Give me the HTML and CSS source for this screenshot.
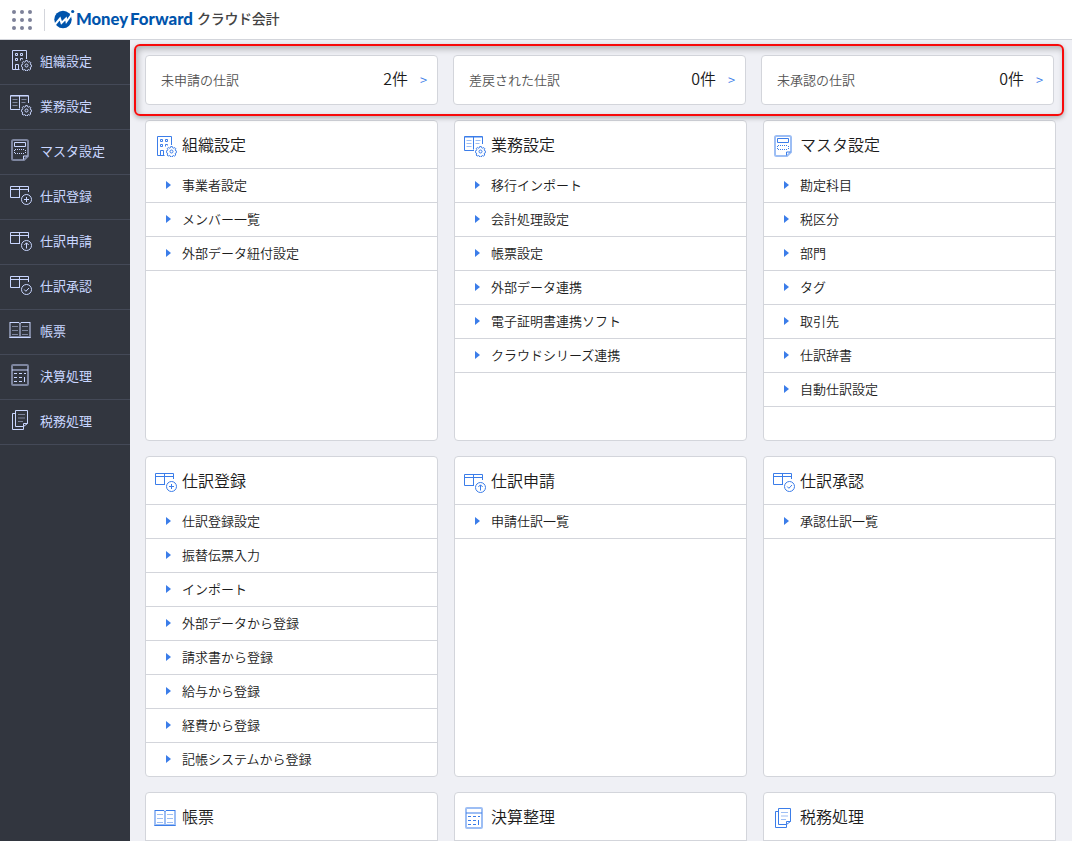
FILE: index.html
```html
<!DOCTYPE html>
<html lang="ja">
<head>
<meta charset="utf-8">
<title>Money Forward クラウド会計</title>
<link rel="stylesheet" href="styles.css">
</head>
<body>
<svg class="sprite" width="0" height="0" aria-hidden="true">
  <symbol id="gear" viewBox="0 0 11 11">
    <path d="M4.600.6h1.800l.3 1.200 1 .4 1.100-.6 1.100 1.200-.7 1 .4 1 1.100.3v1.500l-1.100.3-.4 1 .6 1.100-1.100 1.100-1-.6-1 .4-.3 1.100H4.600l-.3-1.100-1-.4-1.100.6L1.100 9l.6-1.100-.4-1L.3 6.600V4.900l1.100-.3.4-1-.6-1L2.300 1.500l1 .7 1-.4z"/><circle cx="5.500" cy="5.500" r="1.500"/>
  </symbol>
  <symbol id="org" viewBox="0 0 24 24">
    <path d="M11.500 21.500h-7v-19h14V11"/><path d="M7.500 5.500h2v2h-2zM12.500 5.500h2v2h-2zM7.500 10.500h2v2h-2zM12.500 12.500v-2h2v1M7.500 21v-4.500h3V21"/>
    <use href="#gear" x="13" y="12" width="11" height="11"/>
  </symbol>
  <symbol id="biz" viewBox="0 0 24 24">
    <path d="M12 16.500H2.500v-14h18V10M11.500 2.500v13"/><path class="soft" d="M4.500 6.500h5M4.500 9.500h5M4.500 12.500h5M13.500 6.500h5M13.500 9.500h4M3 3.500h17"/>
    <use href="#gear" x="13" y="12" width="11" height="11"/>
  </symbol>
  <symbol id="master" viewBox="0 0 24 24">
    <path class="soft wide" d="M16 22H5.500Q4 22 4 20.500v-17Q4 2 5.500 2h13Q20 2 20 3.500V18z"/><path d="M6.500 4.500h11v4h-11zM15.500 21.500v-3.500h4"/><path class="dash" d="M7 11.500h10M7 15.500h10M6.500 12v3M17.500 12v3"/>
  </symbol>
  <symbol id="table" viewBox="0 0 24 24">
    <path d="M12 14.500H2.500v-11h18V9M2.500 6.500h18M11.500 3.500v11"/><circle cx="18.500" cy="16.500" r="5"/>
  </symbol>
  <symbol id="register" viewBox="0 0 24 24"><use href="#table"/><path d="M18.500 14v5M16 16.500h5"/></symbol>
  <symbol id="apply" viewBox="0 0 24 24"><use href="#table" y="1" width="24" height="24"/><path d="M18.500 20.500v-5.500M16.300 17l2.200-2.200 2.200 2.200"/></symbol>
  <symbol id="approve" viewBox="0 0 24 24"><use href="#table"/><path d="M16.200 16.500l1.700 1.800 3.100-3.300"/></symbol>
  <symbol id="report" viewBox="0 0 24 24">
    <path class="soft wide" d="M2 5v14h20V5M12 5v14"/><path d="M1.500 4.500h9.500l1 1 1-1h9.500M1.500 19.500h21"/><path class="soft" d="M4 8.500h6M4 12.500h6M4 16.500h6M14 8.500h6M14 12.500h6M14 16.500h6"/>
  </symbol>
  <symbol id="closing" viewBox="0 0 24 24">
    <rect class="soft wide" x="4" y="2" width="16" height="20" rx="1"/><path class="soft wide" d="M4 7h16"/><path class="dots" d="M6 10.500h12M6 14.500h8M6 18.500h8"/><path d="M16.500 14v5"/>
  </symbol>
  <symbol id="tax" viewBox="0 0 24 24">
    <path d="M7.500 2.500h12v13l-4 3h-8z"/><path d="M7 5.500H4.500v16h11v-3M15.500 18.500v-3h4"/><path class="soft" d="M10 6.500h7M10 10h7M10 13.500h5"/>
  </symbol>
</svg>

<header class="topbar">
  <svg class="apps" width="22" height="22" viewBox="0 0 22 22"><g><circle cx="3" cy="3" r="2"/><circle cx="11" cy="3" r="2"/><circle cx="19" cy="3" r="2"/><circle cx="3" cy="11" r="2"/><circle cx="11" cy="11" r="2"/><circle cx="19" cy="11" r="2"/><circle cx="3" cy="19" r="2"/><circle cx="11" cy="19" r="2"/><circle cx="19" cy="19" r="2"/></g></svg>
  <div class="brand">
    <svg class="mark" width="22" height="20" viewBox="0 0 22 20"><circle cx="9" cy="10.500" r="8.700" fill="#0054ac"/><path d="M1 15.500L6 9.500l1.500 4.500 4.500-4.500.5 3L18 5" fill="none" stroke="#fff" stroke-width="2"/><circle cx="18.700" cy="2.500" r="1.600" fill="#0054ac"/></svg>
    <svg class="wordmark" width="118" height="28" viewBox="0 0 118 28"><text x="0" y="20" textLength="52" lengthAdjust="spacingAndGlyphs">Money</text><text x="54" y="20" textLength="63" lengthAdjust="spacingAndGlyphs">Forward</text></svg>
    <span class="product">クラウド会計</span>
  </div>
</header>

<div class="layout">
  <nav class="sidebar">
    <a class="nav-item"><svg class="icon"><use href="#org"/></svg>組織設定</a>
    <a class="nav-item"><svg class="icon"><use href="#biz"/></svg>業務設定</a>
    <a class="nav-item"><svg class="icon"><use href="#master"/></svg>マスタ設定</a>
    <a class="nav-item"><svg class="icon"><use href="#register"/></svg>仕訳登録</a>
    <a class="nav-item"><svg class="icon"><use href="#apply"/></svg>仕訳申請</a>
    <a class="nav-item"><svg class="icon"><use href="#approve"/></svg>仕訳承認</a>
    <a class="nav-item"><svg class="icon"><use href="#report"/></svg>帳票</a>
    <a class="nav-item"><svg class="icon"><use href="#closing"/></svg>決算処理</a>
    <a class="nav-item"><svg class="icon"><use href="#tax"/></svg>税務処理</a>
  </nav>

  <main class="main">
    <section class="summary">
      <a class="stat"><span class="stat-label">未申請の仕訳</span><span class="stat-value">2件</span><span class="stat-arrow">&gt;</span></a>
      <a class="stat"><span class="stat-label">差戻された仕訳</span><span class="stat-value">0件</span><span class="stat-arrow">&gt;</span></a>
      <a class="stat"><span class="stat-label">未承認の仕訳</span><span class="stat-value">0件</span><span class="stat-arrow">&gt;</span></a>
      <div class="highlight"></div>
    </section>

    <section class="cards">
      <article class="card"><h2><svg class="icon"><use href="#org"/></svg>組織設定</h2>
        <ul><li>事業者設定</li><li>メンバー一覧</li><li>外部データ紐付設定</li></ul></article>
      <article class="card"><h2><svg class="icon"><use href="#biz"/></svg>業務設定</h2>
        <ul><li>移行インポート</li><li>会計処理設定</li><li>帳票設定</li><li>外部データ連携</li><li>電子証明書連携ソフト</li><li>クラウドシリーズ連携</li></ul></article>
      <article class="card"><h2><svg class="icon"><use href="#master"/></svg>マスタ設定</h2>
        <ul><li>勘定科目</li><li>税区分</li><li>部門</li><li>タグ</li><li>取引先</li><li>仕訳辞書</li><li>自動仕訳設定</li></ul></article>
      <article class="card"><h2><svg class="icon"><use href="#register"/></svg>仕訳登録</h2>
        <ul><li>仕訳登録設定</li><li>振替伝票入力</li><li>インポート</li><li>外部データから登録</li><li>請求書から登録</li><li>給与から登録</li><li>経費から登録</li><li>記帳システムから登録</li></ul></article>
      <article class="card"><h2><svg class="icon"><use href="#apply"/></svg>仕訳申請</h2>
        <ul><li>申請仕訳一覧</li></ul></article>
      <article class="card"><h2><svg class="icon"><use href="#approve"/></svg>仕訳承認</h2>
        <ul><li>承認仕訳一覧</li></ul></article>
      <article class="card"><h2><svg class="icon"><use href="#report"/></svg>帳票</h2></article>
      <article class="card"><h2><svg class="icon"><use href="#closing"/></svg>決算整理</h2></article>
      <article class="card"><h2><svg class="icon"><use href="#tax"/></svg>税務処理</h2></article>
    </section>
  </main>
</div>
</body>
</html>
```
FILE: styles.css
```css
* { box-sizing: border-box; }
html, body { height: 100%; }
body {
  margin: 0;
  display: flex;
  flex-direction: column;
  overflow: hidden;
  background: #eff0f5;
  color: #1c1c1c;
  font-family: "Noto Sans CJK JP", sans-serif;
  font-size: 13px;
  font-weight: 350;
}
.sprite { display: none; }

.topbar {
  flex: none;
  height: 40px;
  display: flex;
  align-items: center;
  padding-left: 11px;
  background: #fff;
  border-bottom: 1px solid #d3d5db;
}
.apps { fill: #7d8199; }
.brand {
  display: flex;
  align-items: center;
  height: 22px;
  margin-left: 11px;
  padding-left: 9px;
  border-left: 1px solid #d3d5db;
}
.mark { margin-top: -2px; }
.wordmark {
  margin-top: -1px;
  overflow: visible;
  fill: #0054ac;
  font-family: Lato, sans-serif;
  font-size: 17px;
  font-weight: 900;
}
.product {
  margin-left: 3px;
  margin-top: -4px;
  font-size: 14px;
  font-weight: 500;
  letter-spacing: -0.3px;
  line-height: 20px;
  color: #444;
}

.layout { flex: 1; min-height: 0; display: flex; }
.sidebar { flex: none; width: 130px; background: #32363f; }
.nav-item {
  display: flex;
  align-items: center;
  gap: 8px;
  height: 45px;
  padding: 0 0 4px 8px;
  border-bottom: 1px solid #444957;
  color: #c9d6ff;
  font-weight: 400;
}
.icon {
  flex: none;
  width: 24px;
  height: 24px;
  fill: none;
  stroke: currentColor;
  stroke-width: 1;
}
.soft { opacity: .5; }
.wide { stroke-width: 2; }
.dash { stroke-dasharray: 1 1; }
.dots { stroke-dasharray: 3 2; }

.main { flex: 1; min-width: 0; overflow: hidden; padding: 15px 16px 0 15px; }
.summary {
  position: relative;
  display: grid;
  grid-template-columns: repeat(3, 293px);
  gap: 15px;
}
.stat {
  display: flex;
  align-items: center;
  height: 50px;
  padding: 0 9px 2px 15px;
  background: #fff;
  border: 1px solid #d3d5db;
  border-radius: 4px;
}
.stat-label { flex: 1; color: #555; }
.stat-value { margin-top: -2px; font-size: 16px; }
.stat-arrow { margin-left: 12px; width: 8px; color: #3b7de9; }
.highlight {
  position: absolute;
  left: -11px;
  top: -11px;
  width: 930px;
  height: 72px;
  border: 2px solid #f80a0a;
  border-radius: 6px;
  box-shadow: 0 2px 5px rgba(0, 0, 0, .28), inset 2px 3px 6px rgba(0, 0, 0, .25);
}

.cards {
  display: grid;
  grid-template-columns: repeat(3, 293px);
  grid-auto-rows: 321px;
  gap: 15px 16px;
  margin-top: 15px;
}
.card {
  background: #fff;
  border: 1px solid #d3d5db;
  border-radius: 4px;
}
.card h2 {
  display: flex;
  align-items: center;
  gap: 5px;
  height: 48px;
  margin: 0;
  padding: 0 0 2px 7px;
  border-bottom: 1px solid #d3d5db;
  font-size: 16px;
  font-weight: 350;
}
.card .icon { color: #3b7de9; margin-top: 5px; }
.card ul { margin: 0; padding: 0; list-style: none; }
.card li {
  display: flex;
  align-items: center;
  height: 34px;
  padding: 0 0 2px 20px;
  border-bottom: 1px solid #d3d5db;
}
.card li::before {
  content: "";
  margin-right: 11px;
  border: 4px solid transparent;
  border-left: 5px solid #3b7de9;
  border-right: 0;
}
.card li:nth-child(8) { border-bottom-color: transparent; }
```
